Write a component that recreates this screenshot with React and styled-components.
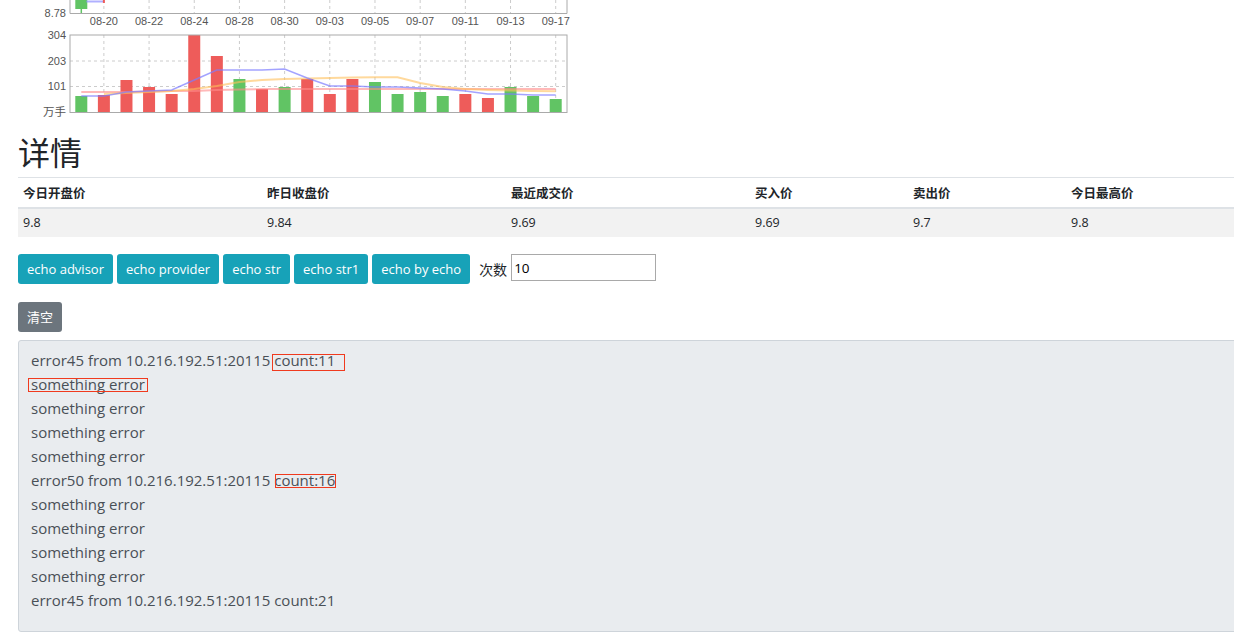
import React from "react";
import styled, { createGlobalStyle } from "styled-components";

const Global = createGlobalStyle`
  html, body { margin: 0; padding: 0; background: #fff; }
  body {
    font-family: "Open Sans", "Noto Sans CJK SC", sans-serif;
    color: #212529;
    overflow: hidden;
  }
`;

const Page = styled.div`
  width: 100%;
  overflow: hidden;
`;

const ChartSvg = styled.svg`
  display: block;
  width: 580px;
  height: 119px;
  font-family: "Liberation Sans", "Noto Sans CJK SC", sans-serif;
`;

const Main = styled.div`
  padding-left: 18px;
`;

const Heading = styled.h2`
  margin: 12px 0 6px;
  font-family: "Noto Sans CJK SC", sans-serif;
  font-size: 32px;
  font-weight: 400;
  line-height: 40px;
  color: #212529;
`;

const Table = styled.table`
  width: 100%;
  border-collapse: collapse;
  table-layout: fixed;
  font-family: "Noto Sans CJK SC", sans-serif;
  font-size: 12.5px;
`;

const Th = styled.th`
  text-align: left;
  font-weight: 700;
  padding: 6px 5px;
  line-height: 17px;
  border-top: 1px solid #dee2e6;
  border-bottom: 2px solid #dee2e6;
  color: #212529;
`;

const Td = styled.td`
  padding: 6px 5px;
  line-height: 16px;
  background: #f2f2f2;
  color: #212529;
  font-family: "Open Sans", "Noto Sans CJK SC", sans-serif;
  font-size: 12.5px;
`;

const Toolbar = styled.div`
  display: flex;
  align-items: flex-start;
  gap: 4px;
  margin-top: 17px;
`;

const Button = styled.button`
  font-family: "Open Sans", "Noto Sans CJK SC", sans-serif;
  font-size: 13px;
  line-height: 20px;
  padding: 5px 9px;
  border: none;
  border-radius: 3px;
  color: #fff;
  background: ${(p) => (p.$variant === "secondary" ? "#6c757d" : "#17a2b8")};
  cursor: pointer;
`;

const Label = styled.span`
  font-family: "Noto Sans CJK SC", sans-serif;
  font-size: 14px;
  line-height: 30px;
  padding-left: 5px;
  color: #212529;
`;

const Input = styled.input`
  box-sizing: border-box;
  width: 145px;
  height: 27px;
  border: 1px solid #a9a9a9;
  padding: 1px 2px;
  font-family: "Open Sans", sans-serif;
  font-size: 13.5px;
  color: #000;
`;

const ClearRow = styled.div`
  margin-top: 18px;
`;

const LogBox = styled.div`
  margin-top: 8px;
  margin-right: -6px;
  background: #e9ecef;
  border: 1px solid #ced4da;
  border-radius: 3px;
  padding: 7px 12px 19px;
  font-family: "Open Sans", sans-serif;
  font-size: 15px;
  line-height: 24px;
  color: #495057;
  min-height: 264px;
`;

const Line = styled.div`
  white-space: nowrap;
`;

const Mark = styled.span`
  position: relative;
  &::after {
    content: "";
    position: absolute;
    left: ${(p) => p.$l}px;
    right: ${(p) => p.$r}px;
    top: ${(p) => p.$t}px;
    bottom: ${(p) => p.$b}px;
    border: 1px solid #f03a1e;
    pointer-events: none;
  }
`;

const W = 22;
const X0 = 70;
const X1 = 567;
const cw = (X1 - X0) / W;
const cx = (i) => X0 + cw * (i + 0.5);

const bars = [
  ["g", 96], ["r", 95], ["r", 80], ["r", 87], ["r", 94], ["r", 35], ["r", 56],
  ["g", 79], ["r", 89], ["g", 87], ["r", 79], ["r", 94], ["r", 79], ["g", 82],
  ["g", 94], ["g", 92], ["g", 96], ["r", 94], ["r", 98], ["g", 87], ["g", 96], ["g", 99],
];

const blue = [96, 96, 92, 91, 90, 80, 70, 70, 70, 69, 78, 86, 86, 87, 87, 88, 89, 91, 94, 94, 95, 95];
const orange = [null, 94, 93, 92, 91, 89, 86, 82, 80, 79, 78.5, 78, 77.5, 77.3, 77.3, 83, 87, 89, 90, 90.5, 91, 91.3];
const pink = [92, 92, 92, 91.5, 91, 91, 90, 89.5, 89, 89, 89, 89, 89, 89, 89, 89, 89, 89, 89, 89, 89, 89];

const pts = (arr) =>
  arr
    .map((y, i) => (y == null ? null : `${cx(i).toFixed(1)},${y}`))
    .filter(Boolean)
    .join(" ");

const labels = ["08-20", "08-22", "08-24", "08-28", "08-30", "09-03", "09-05", "09-07", "09-11", "09-13", "09-17"];

function Chart() {
  const gridX = labels.map((_, k) => cx(1 + 2 * k));
  return (
    <ChartSvg viewBox="0 0 580 119">
      {/* price chart (scrolled, only its bottom visible) */}
      {gridX.map((x, k) => (
        <line key={"pg" + k} x1={x} x2={x} y1={0} y2={13} stroke="#ccc" strokeDasharray="3,3" />
      ))}
      <rect x={cx(0) - 6} y={-2} width={12} height={11} fill="#61c464" />
      <line x1={cx(0)} x2={cx(0)} y1={9} y2={13} stroke="#61c464" strokeWidth={1.5} />
      <polyline points={`${cx(0) + 5},1.5 ${cx(1)},1.5`} fill="none" stroke="#8f8fff" strokeWidth={2} opacity={0.7} />
      <rect x={cx(1) - 1} y={0} width={2} height={3} fill="#ee5c5a" />
      <line x1={X0} x2={X0} y1={0} y2={13.5} stroke="#aaa" />
      <line x1={X1} x2={X1} y1={0} y2={13.5} stroke="#aaa" />
      <line x1={X0} x2={X1} y1={13.5} y2={13.5} stroke="#aaa" />
      <text x={66} y={17} fontSize={11} fill="#555" textAnchor="end">8.78</text>
      {labels.map((l, k) => (
        <text key={l} x={gridX[k]} y={25} fontSize={11} fill="#555" textAnchor="middle">{l}</text>
      ))}

      {/* volume chart */}
      {gridX.map((x, k) => (
        <line key={"vg" + k} x1={x} x2={x} y1={35} y2={112.5} stroke="#ccc" strokeDasharray="3,3" />
      ))}
      <line x1={X0} x2={X1} y1={61} y2={61} stroke="#ccc" strokeDasharray="3,3" />
      <line x1={X0} x2={X1} y1={86.5} y2={86.5} stroke="#ccc" strokeDasharray="3,3" />
      {bars.map(([c, top], i) => (
        <rect
          key={i}
          x={cx(i) - 6}
          y={top}
          width={12}
          height={112.5 - top}
          fill={c === "g" ? "#61c464" : "#ee5c5a"}
        />
      ))}
      <polyline points={pts(pink)} fill="none" stroke="#ff8a8a" strokeWidth={2} opacity={0.6} />
      <polyline points={pts(orange)} fill="none" stroke="#ffbf5a" strokeWidth={2} opacity={0.6} />
      <polyline points={pts(blue)} fill="none" stroke="#7c7cff" strokeWidth={1.5} opacity={0.7} />
      <rect x={X0} y={35} width={X1 - X0} height={77.5} fill="none" stroke="#aaa" />
      <text x={66} y={39} fontSize={11} fill="#555" textAnchor="end">304</text>
      <text x={66} y={65} fontSize={11} fill="#555" textAnchor="end">203</text>
      <text x={66} y={90} fontSize={11} fill="#555" textAnchor="end">101</text>
      <text x={66} y={116} fontSize={11.5} fill="#555" textAnchor="end">万手</text>
    </ChartSvg>
  );
}

const heads = ["今日开盘价", "昨日收盘价", "最近成交价", "买入价", "卖出价", "今日最高价"];
const vals = ["9.8", "9.84", "9.69", "9.69", "9.7", "9.8"];
const widths = [244, 244, 244, 158, 158, null];

const buttons = ["echo advisor", "echo provider", "echo str", "echo str1", "echo by echo"];

export default function App() {
  return (
    <Page>
      <Global />
      <Chart />
      <Main>
        <Heading>详情</Heading>
        <Table>
          <colgroup>
            {widths.map((w, i) => (
              <col key={i} style={w ? { width: w } : undefined} />
            ))}
          </colgroup>
          <thead>
            <tr>
              {heads.map((h) => (
                <Th key={h}>{h}</Th>
              ))}
            </tr>
          </thead>
          <tbody>
            <tr>
              {vals.map((v, i) => (
                <Td key={i}>{v}</Td>
              ))}
            </tr>
          </tbody>
        </Table>
        <Toolbar>
          {buttons.map((b) => (
            <Button key={b}>{b}</Button>
          ))}
          <Label>次数</Label>
          <Input defaultValue="10" />
        </Toolbar>
        <ClearRow>
          <Button $variant="secondary">清空</Button>
        </ClearRow>
        <LogBox>
          <Line>
            error45 from 10.216.192.51:20115{" "}
            <Mark $l={-2} $r={-10} $t={4} $b={-1}>count:11</Mark>
          </Line>
          <Line>
            <Mark $l={-3} $r={-3} $t={4} $b={2}>something error</Mark>
          </Line>
          <Line>something error</Line>
          <Line>something error</Line>
          <Line>something error</Line>
          <Line>
            error50 from 10.216.192.51:20115{" "}
            <Mark $l={1} $r={-1} $t={4} $b={2}>count:16</Mark>
          </Line>
          <Line>something error</Line>
          <Line>something error</Line>
          <Line>something error</Line>
          <Line>something error</Line>
          <Line>error45 from 10.216.192.51:20115 count:21</Line>
        </LogBox>
      </Main>
    </Page>
  );
}
